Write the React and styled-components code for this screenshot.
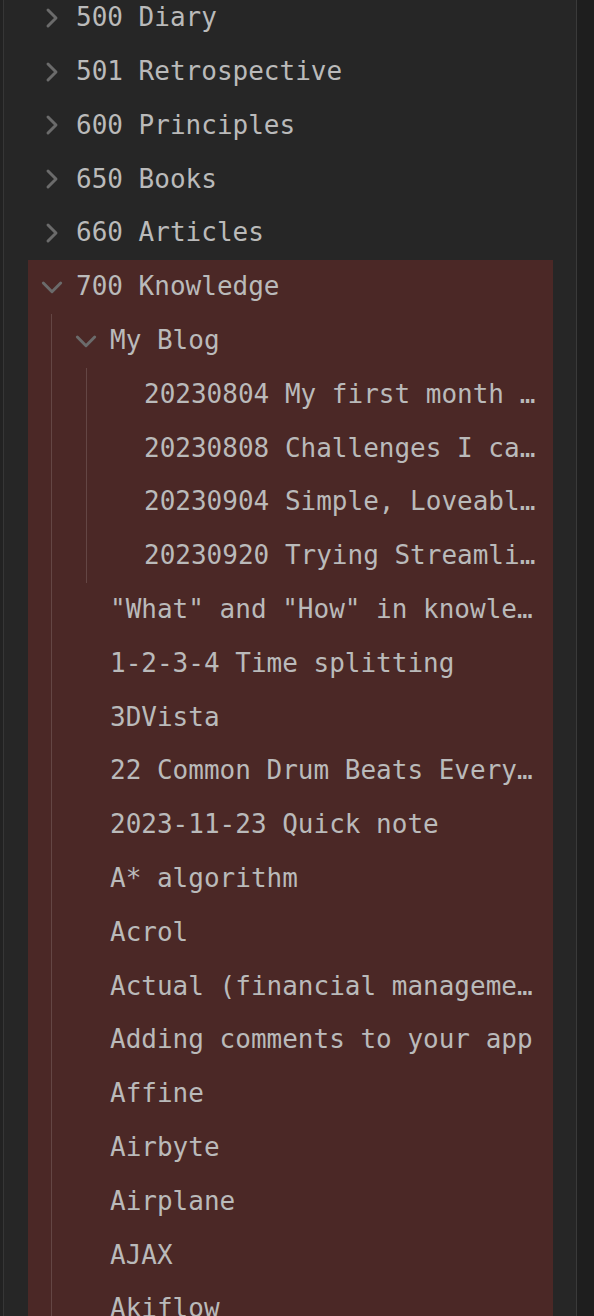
import React from "react";
import styled, { createGlobalStyle } from "styled-components";

const GlobalStyle = createGlobalStyle`
  html, body {
    margin: 0;
    padding: 0;
    background: #1e1e1e;
  }
  #root {
    height: 1316px;
  }
`;

const Screen = styled.div`
  display: flex;
  height: 1316px;
  overflow: hidden;
  font-family: "DejaVu Sans Mono", "Liberation Mono", monospace;
  font-size: 26px;
  color: #bababa;
`;

const Sidebar = styled.div`
  width: 577px;
  flex: none;
  box-sizing: border-box;
  background: #262626;
  border-left: 3px solid #222222;
  box-shadow: inset 1px 0 0 #363636;
  border-right: 1px solid #3a3a3a;
  padding: 0 23px 0 25px;
  overflow: hidden;
`;

const Pane = styled.div`
  flex: 1;
  background: #1e1e1e;
`;

const Tree = styled.div`
  display: flex;
  flex-direction: column;
  margin-top: -9px;
`;

const Folder = styled.div`
  display: flex;
  flex-direction: column;
  background: ${(p) => (p.$active ? "#4b2826" : "transparent")};
`;

const Children = styled.div`
  display: flex;
  flex-direction: column;
  margin-left: ${(p) => p.$offset}px;
  border-left: 1px solid
    ${(p) => (p.$active ? "rgba(255, 255, 255, 0.14)" : "#3a3a3a")};
`;

const Row = styled.div`
  display: flex;
  align-items: center;
  height: 53.8px;
  padding-left: ${(p) => p.$pad}px;
  padding-right: 12px;
  box-sizing: border-box;
  min-width: 0;
`;

const Chevron = styled.span`
  width: 32px;
  height: 32px;
  flex: none;
  display: flex;
  align-items: center;
  justify-content: center;
  margin-right: 8px;
  color: #6b6b6b;
`;

const Title = styled.span`
  flex: 1;
  min-width: 0;
  white-space: pre;
  overflow: hidden;
  text-overflow: ellipsis;
  line-height: 1.2;
`;

const Arrow = ({ open }) => (
  <svg
    width="32"
    height="32"
    viewBox="0 0 24 24"
    fill="none"
    stroke="currentColor"
    strokeWidth="2.2"
    strokeLinecap="round"
    strokeLinejoin="round"
  >
    {open ? <path d="m5.5 9 6.5 6.5 6.5-6.5" /> : <path d="m9 18 6-6-6-6" />}
  </svg>
);

const Item = ({ pad, folder, open, children }) => (
  <Row $pad={pad}>
    <Chevron>{folder && <Arrow open={open} />}</Chevron>
    <Title>{children}</Title>
  </Row>
);

const topFolders = [
  "500 Diary",
  "501 Retrospective",
  "600 Principles",
  "650 Books",
  "660 Articles",
];

const blogPosts = [
  "20230804 My first month as an indie maker",
  "20230808 Challenges I came across",
  "20230904 Simple, Loveable, Complete",
  "20230920 Trying Streamlit for dashboards",
];

const notes = [
  '"What" and "How" in knowledge management',
  "1-2-3-4 Time splitting",
  "3DVista",
  "22 Common Drum Beats Every Drummer Should Know",
  "2023-11-23 Quick note",
  "A* algorithm",
  "Acrol",
  "Actual (financial management)",
  "Adding comments to your app",
  "Affine",
  "Airbyte",
  "Airplane",
  "AJAX",
  "Akiflow",
  "Alacritty",
];

const App = () => {
  return (
    <>
      <GlobalStyle />
      <Screen>
        <Sidebar>
          <Tree>
            {topFolders.map((name) => (
              <Item key={name} pad={8} folder>
                {name}
              </Item>
            ))}
            <Folder $active>
              <Item pad={8} folder open>
                700 Knowledge
              </Item>
              <Children $offset={23} $active>
                <Item pad={18} folder open>
                  My Blog
                </Item>
                <Children $offset={34} $active>
                  {blogPosts.map((name) => (
                    <Item key={name} pad={17}>
                      {name}
                    </Item>
                  ))}
                </Children>
                {notes.map((name) => (
                  <Item key={name} pad={18}>
                    {name}
                  </Item>
                ))}
              </Children>
            </Folder>
          </Tree>
        </Sidebar>
        <Pane />
      </Screen>
    </>
  );
};

export default App;
